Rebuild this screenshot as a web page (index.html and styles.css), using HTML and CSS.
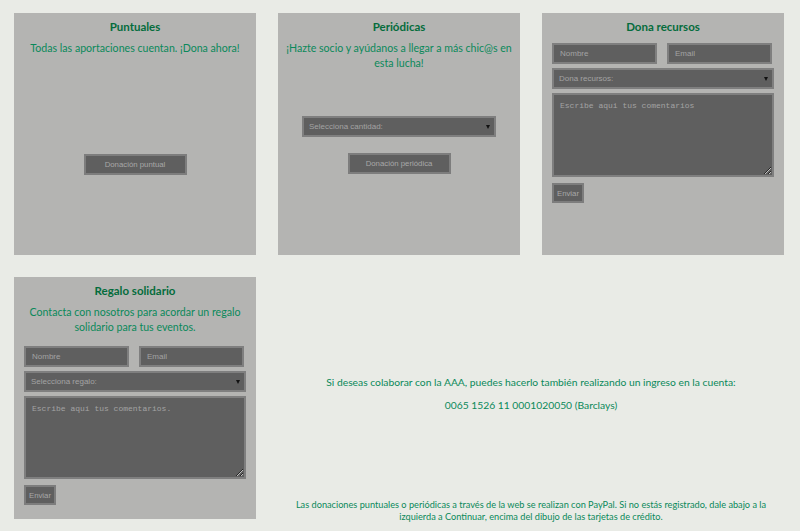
FILE: index.html
```html
<!DOCTYPE html>
<html lang="es">
<head>
<meta charset="utf-8">
<title>Dona</title>
<link rel="stylesheet" href="styles.css">
</head>
<body>
<main class="grid">
  <section class="card">
    <h2 class="card-title">Puntuales</h2>
    <p class="card-text">Todas las aportaciones cuentan. ¡Dona ahora!</p>
    <div class="actions actions-single">
      <button class="btn btn-wide" type="button">Donación puntual</button>
    </div>
  </section>

  <section class="card">
    <h2 class="card-title">Periódicas</h2>
    <p class="card-text">¡Hazte socio y ayúdanos a llegar a más chic@s en esta lucha!</p>
    <div class="actions actions-select">
      <div class="select-wrap select-mid">
        <select class="field select">
          <option>Selecciona cantidad:</option>
        </select>
      </div>
      <button class="btn btn-wide" type="button">Donación periódica</button>
    </div>
  </section>

  <section class="card">
    <h2 class="card-title">Dona recursos</h2>
    <form class="form form-top">
      <div class="row">
        <input class="field" type="text" placeholder="Nombre">
        <input class="field" type="text" placeholder="Email">
      </div>
      <div class="select-wrap"><select class="field select"><option>Dona recursos:</option></select></div>
      <textarea class="field area" placeholder="Escribe aqui tus comentarios"></textarea>
      <button class="btn btn-small" type="button">Enviar</button>
    </form>
  </section>

  <section class="card">
    <h2 class="card-title">Regalo solidario</h2>
    <p class="card-text">Contacta con nosotros para acordar un regalo solidario para tus eventos.</p>
    <form class="form form-gift">
      <div class="row">
        <input class="field" type="text" placeholder="Nombre">
        <input class="field" type="text" placeholder="Email">
      </div>
      <div class="select-wrap"><select class="field select"><option>Selecciona regalo:</option></select></div>
      <textarea class="field area area-gift" placeholder="Escribe aquí tus comentarios."></textarea>
      <button class="btn btn-small" type="button">Enviar</button>
    </form>
  </section>

  <section class="info">
    <div class="bank">
      <p>Si deseas colaborar con la AAA, puedes hacerlo también realizando un ingreso en la cuenta:</p>
      <p>0065 1526 11 0001020050 (Barclays)</p>
    </div>
    <p class="note">Las donaciones puntuales o periódicas a través de la web se realizan con PayPal. Si no estás registrado, dale abajo a la izquierda a Continuar, encima del dibujo de las tarjetas de crédito.</p>
  </section>
</main>
</body>
</html>
```

FILE: styles.css
```css
* { box-sizing: border-box; }

html, body {
  margin: 0;
  background: #e9ebe6;
}

body {
  font-family: "Lato", "Open Sans", sans-serif;
  color: #0a895a;
  width: 800px;
  height: 531px;
  overflow: hidden;
}

.grid {
  display: grid;
  grid-template-columns: repeat(3, 242px);
  grid-template-rows: 242px 242px;
  column-gap: 22px;
  row-gap: 22px;
  padding: 13px 0 0 14px;
}

.card {
  background: #b4b4b2;
  padding: 7px 10px 10px;
  display: flex;
  flex-direction: column;
}

.card-title {
  margin: 0;
  font-size: 11.5px;
  line-height: 14px;
  font-weight: 700;
  text-align: center;
  color: #046c3c;
}

.card-text {
  margin: 7px -6px 0;
  font-size: 10.6px;
  line-height: 15px;
  text-align: center;
  color: #0a895a;
}

.actions {
  display: flex;
  flex-direction: column;
  align-items: center;
}

.actions-single { margin-top: 98px; }
.actions-select { margin-top: 45px; gap: 16px; }

.field {
  display: block;
  background: #5f5f5f;
  border: 2px solid #7f7f7f;
  color: #a8a8a8;
  font-family: "Liberation Sans", Arial, sans-serif;
  font-size: 8px;
  height: 21px;
  padding: 0 6px;
  margin: 0;
  border-radius: 0;
  outline: none;
}

.field::placeholder { color: #a3a3a3; }

.select-wrap {
  position: relative;
  width: 222px;
}

.select-wrap::after {
  content: "";
  position: absolute;
  right: 6px;
  top: 9px;
  border-left: 2.5px solid transparent;
  border-right: 2.5px solid transparent;
  border-top: 4px solid #111;
  pointer-events: none;
}

.select-mid { width: 194px; }

.select {
  width: 100%;
  color: #a3a3a3;
  appearance: none;
  -webkit-appearance: none;
  padding-left: 5px;
}

.btn {
  background: #5f5f5f;
  border: 2px solid #7d7d7d;
  color: #a8a8a8;
  font-family: "Liberation Sans", Arial, sans-serif;
  font-size: 7.8px;
  height: 21px;
  padding: 0;
  margin: 0;
  border-radius: 0;
}

.btn-wide { width: 103px; }
.btn-small { width: 32px; height: 20px; }

.form {
  display: flex;
  flex-direction: column;
  align-items: flex-start;
  gap: 4px;
}

.form-top { margin-top: 9px; }
.form-gift { margin-top: 11px; }

.row {
  display: flex;
  gap: 10px;
  width: 222px;
}

.row .field { width: 105px; }

.area {
  width: 222px;
  height: 84px;
  padding: 6px;
  font-family: "Liberation Mono", "Courier New", monospace;
  font-size: 8px;
  resize: vertical;
}

.area-gift { height: 83px; }

.form .btn-small { margin-top: 2px; }

.info {
  grid-column: 2 / span 2;
  display: flex;
  flex-direction: column;
  align-items: center;
  text-align: center;
}

.bank {
  margin-top: 98px;
}

.bank p {
  margin: 0 0 9px;
  font-size: 10.3px;
  line-height: 14px;
}

.note {
  margin: auto 0 -4px;
  padding: 0 8px;
  font-size: 9.2px;
  line-height: 12px;
}
```
